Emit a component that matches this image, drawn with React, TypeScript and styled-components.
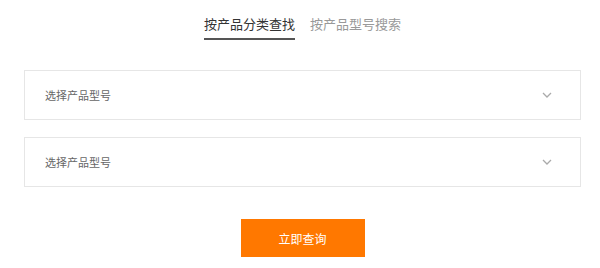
import React, { useState } from 'react';
import styled, { createGlobalStyle } from 'styled-components';

const GlobalStyle = createGlobalStyle`
  html, body {
    margin: 0;
    padding: 0;
    background: #fff;
    font-family: "Microsoft YaHei", "Noto Sans CJK SC", "Liberation Sans", sans-serif;
  }
`;

const PAGE = styled.div`
  width: 557px;
  margin-left: 24px;
  display: flex;
  flex-direction: column;
  align-items: center;
`;

const TABS = styled.div`
  display: flex;
  gap: 15px;
  margin-top: 13px;
`;

const TAB = styled.div<{ $active?: boolean }>`
  font-size: 13px;
  line-height: 22px;
  padding-bottom: 3px;
  color: ${(p) => (p.$active ? '#333' : '#999')};
  border-bottom: 2px solid ${(p) => (p.$active ? '#555' : 'transparent')};
  cursor: pointer;
`;

const FORM = styled.div`
  width: 100%;
  margin-top: 30px;
  display: flex;
  flex-direction: column;
  gap: 17px;
`;

const SELECT = styled.div`
  box-sizing: border-box;
  height: 50px;
  border: 1px solid #e6e6e6;
  padding: 0 28px 0 20px;
  display: flex;
  align-items: center;
  justify-content: space-between;
  font-size: 11px;
  color: #666;
  cursor: pointer;
`;

const BUTTON = styled.button`
  margin-top: 32px;
  width: 124px;
  height: 38px;
  border: none;
  background: #ff7800;
  color: #fff;
  font-family: inherit;
  font-size: 12px;
  cursor: pointer;
`;

const Chevron = () => (
  <svg width="10" height="6" viewBox="0 0 10 6" fill="none">
    <path d="M1 1l4 4 4-4" stroke="#aaa" strokeWidth="1.3" />
  </svg>
);

const App: React.FC = () => {
  const [tab, setTab] = useState<number>(0);

  return (
    <PAGE>
      <GlobalStyle />
      <TABS>
        <TAB $active={tab === 0} onClick={() => setTab(0)}>按产品分类查找</TAB>
        <TAB $active={tab === 1} onClick={() => setTab(1)}>按产品型号搜索</TAB>
      </TABS>
      <FORM>
        <SELECT>选择产品型号<Chevron /></SELECT>
        <SELECT>选择产品型号<Chevron /></SELECT>
      </FORM>
      <BUTTON>立即查询</BUTTON>
    </PAGE>
  );
};

export default App;
